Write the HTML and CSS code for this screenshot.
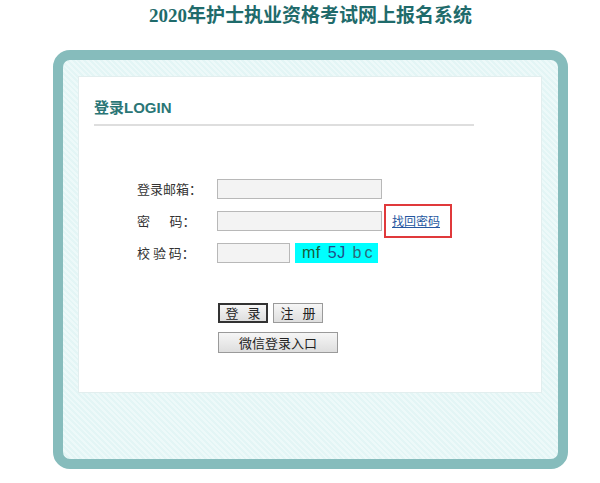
FILE: index.html
```html
<!DOCTYPE html>
<html lang="zh-CN">
<head>
  <meta charset="UTF-8" />
  <meta name="viewport" content="width=device-width, initial-scale=1.0" />
  <title>2020年护士执业资格考试网上报名系统</title>
  <link rel="stylesheet" href="styles.css">
</head>
<body>
  <div class="wrap">
    <h1 class="title">2020年护士执业资格考试网上报名系统</h1>

    <div class="frame">
      <div class="panel">
        <h2 class="panel-head">登录LOGIN</h2>

        <form class="login-form" onsubmit="return false;">
          <label class="label" for="email">登录邮箱：</label>
          <div class="field"><input id="email" class="input" type="text" /></div>

          <label class="label" for="pwd">密&emsp;&ensp;码：</label>
          <div class="field">
            <input id="pwd" class="input" type="password" />
            <span class="forgot"><a href="#">找回密码</a></span>
          </div>

          <label class="label" for="code">校 验 码：</label>
          <div class="field">
            <input id="code" class="input input-short" type="text" />
            <span class="captcha"><span class="c1">mf</span> <span class="c2">5J</span> <span class="c3">bc</span></span>
          </div>
        </form>

        <div class="actions">
          <div class="btn-row">
            <button class="btn btn-main">登 录</button>
            <button class="btn">注 册</button>
          </div>
          <button class="btn btn-wide">微信登录入口</button>
        </div>
      </div>
    </div>
  </div>
</body>
</html>
```

FILE: styles.css
```css
body {
  margin: 0;
  padding: 0;
  background: #fff;
  color: #333;
  font-family: "Liberation Sans", "Noto Sans CJK SC", sans-serif;
}

.wrap {
  width: 515px;
  margin-left: 53px;
}

.title {
  margin: 0;
  height: 50px;
  padding-top: 4px;
  box-sizing: border-box;
  text-align: center;
  font-family: "Liberation Serif", "Noto Sans CJK SC", serif;
  font-size: 19px;
  font-weight: bold;
  line-height: 24px;
  color: #1f6b6b;
}

.frame {
  height: 419px;
  box-sizing: border-box;
  border: 10px solid #86bcbc;
  border-radius: 17px;
  padding: 16px 16px 0 15px;
  background: repeating-linear-gradient(45deg, #e3f5f5 0 2px, #edf9f9 2px 4px);
}

.panel {
  height: 317px;
  box-sizing: border-box;
  background: #fff;
  border: 1px solid #e2eeee;
  padding: 20px 0 0 15px;
}

.panel-head {
  margin: 0;
  width: 380px;
  font-size: 15px;
  line-height: 22px;
  color: #2a7676;
  padding-bottom: 5px;
  border-bottom: 2px solid #dedede;
}

.login-form {
  display: grid;
  grid-template-columns: 80px auto;
  row-gap: 12px;
  margin: 53px 0 0 43px;
  font-size: 13px;
}

.label {
  line-height: 20px;
  color: #333;
  white-space: nowrap;
  font-family: "Noto Sans CJK SC", sans-serif;
}

.field {
  display: flex;
  align-items: center;
  height: 20px;
}

.input {
  width: 165px;
  height: 20px;
  box-sizing: border-box;
  border: 1px solid #b8b8b8;
  background: #f3f3f3;
  padding: 0 3px;
  margin: 0;
}

.input-short {
  width: 73px;
}

.forgot {
  margin-left: 2px;
  padding: 6px 10px 6px 6px;
  border: 2px solid #e0393b;
  line-height: 17px;
}

.forgot a {
  color: #2557a0;
  font-size: 12px;
  font-family: "Noto Sans CJK SC", sans-serif;
}

.captcha {
  margin-left: 5px;
  width: 83px;
  height: 20px;
  background: #00ffff;
  font-size: 16px;
  line-height: 20px;
  padding-left: 7px;
  box-sizing: border-box;
  letter-spacing: 0.5px;
  word-spacing: 2px;
  white-space: nowrap;
  overflow: hidden;
}

.c1 { color: #175c38; }
.c2 { color: #1f4f8a; }
.c3 { color: #2b6a7a; letter-spacing: 3px; }

.actions {
  margin: 40px 0 0 124px;
  display: flex;
  flex-direction: column;
  align-items: flex-start;
  gap: 9px;
}

.btn-row {
  display: flex;
  gap: 5px;
}

.btn {
  height: 20px;
  padding: 0;
  font-family: "Noto Sans CJK SC", sans-serif;
  font-size: 13px;
  line-height: 16px;
  letter-spacing: 3px;
  text-indent: 3px;
  color: #222;
  background: linear-gradient(#f6f6f6, #dedede);
  border: 1px solid #9a9a9a;
  width: 50px;
}

.btn-main {
  border: 2px solid #333;
}

.btn-wide {
  width: 120px;
  height: 21px;
  letter-spacing: 0;
  text-indent: 0;
}
```
